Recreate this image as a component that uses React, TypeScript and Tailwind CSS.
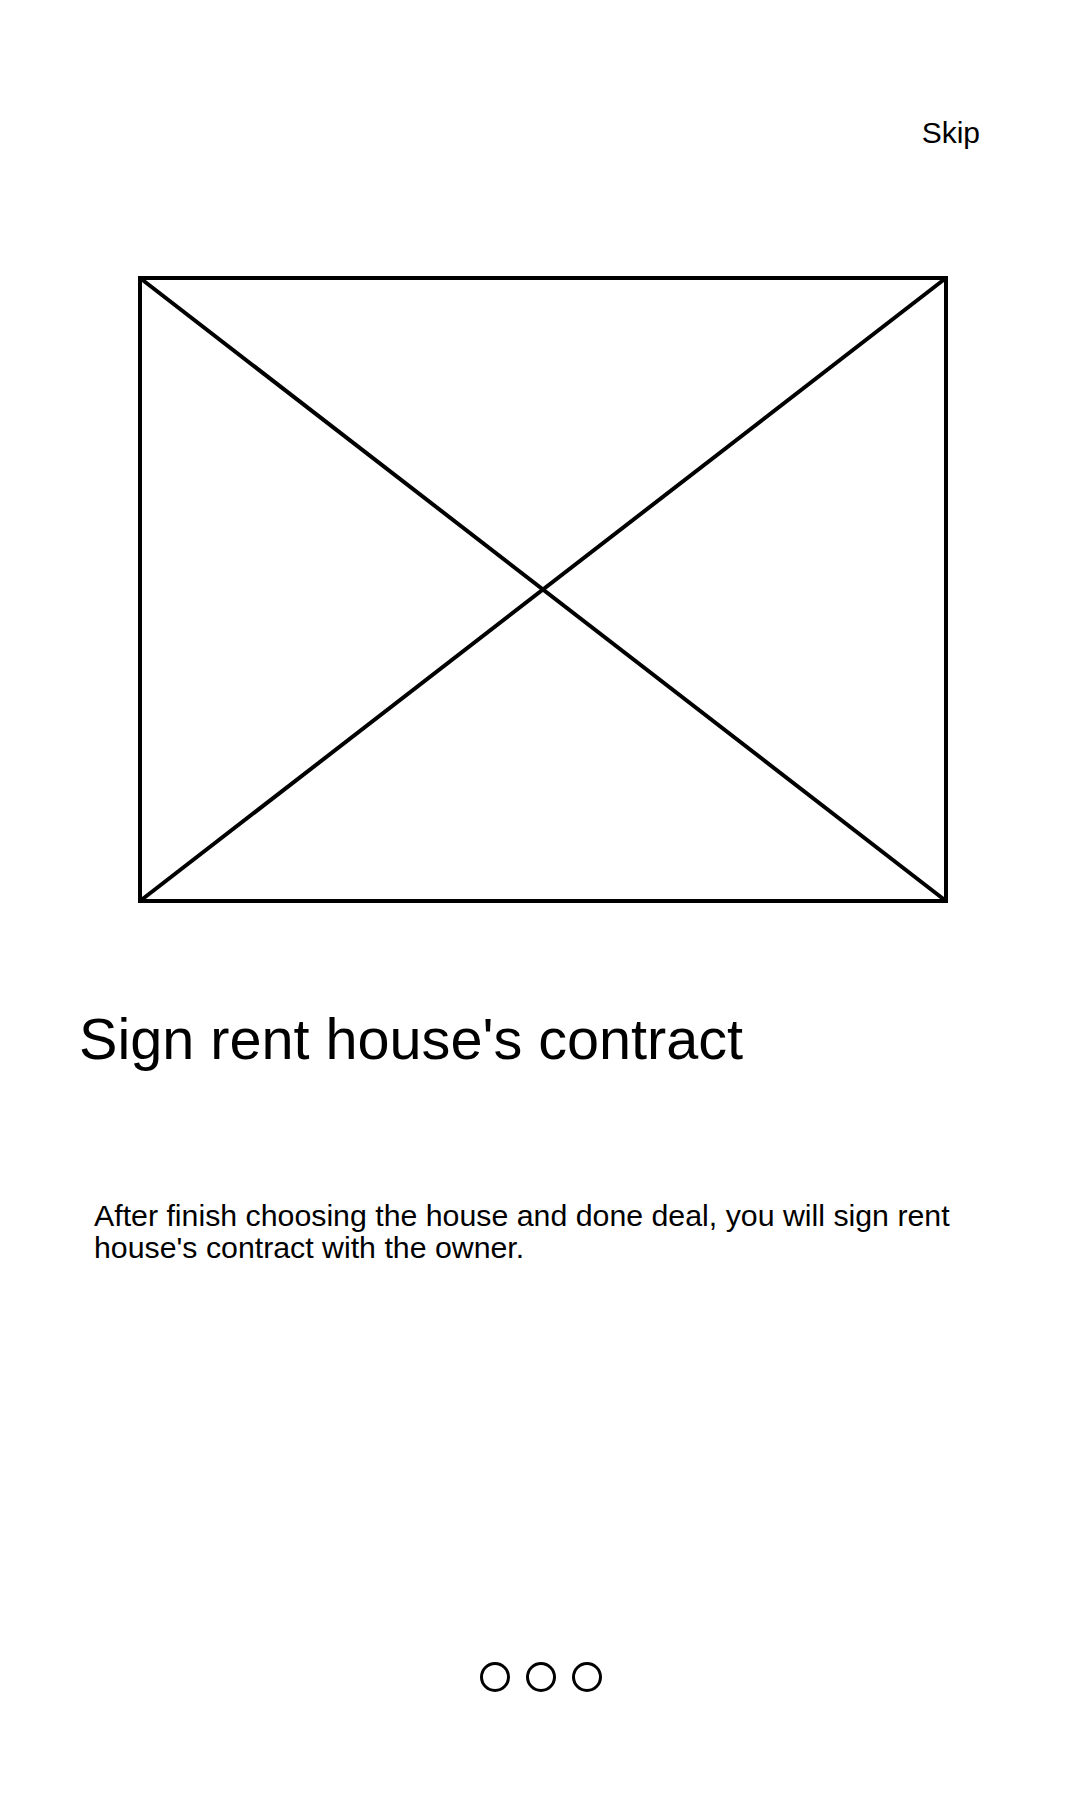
export default function App() {
  return (
    <div className="flex min-h-[1800px] w-[1080px] flex-col bg-white font-['Liberation_Sans',Arial,sans-serif] text-black">
      {/* Top bar */}
      <div className="flex justify-end pr-[100px] pt-[116px]">
        <button className="text-[30px] leading-[34px]">Skip</button>
      </div>

      {/* Image placeholder */}
      <div className="ml-[138px] mt-[126px]">
        <svg width="810" height="627" viewBox="0 0 810 627" fill="none" stroke="black" strokeWidth="4">
          <rect x="2" y="2" width="806" height="623" />
          <line x1="2" y1="2" x2="808" y2="625" />
          <line x1="808" y1="2" x2="2" y2="625" />
        </svg>
      </div>

      {/* Title */}
      <h1 className="ml-[79px] mt-[103px] text-[57.6px] leading-[66px]">Sign rent house's contract</h1>

      {/* Description */}
      <p className="ml-[94px] mr-[110px] mt-[128px] text-[30.3px] leading-[32px]">
        After finish choosing the house and done deal, you will sign rent house's contract with the owner.
      </p>

      {/* Pager dots */}
      <div className="mt-[398px] flex justify-center gap-[16px] pl-[2px]">
        <span className="h-[30px] w-[30px] rounded-full border-[3px] border-black" />
        <span className="h-[30px] w-[30px] rounded-full border-[3px] border-black" />
        <span className="h-[30px] w-[30px] rounded-full border-[3px] border-black" />
      </div>
    </div>
  )
}
